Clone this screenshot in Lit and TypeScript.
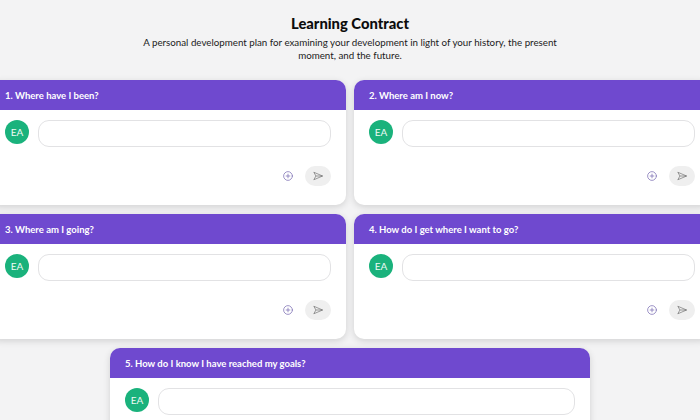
import { LitElement, html, css } from 'lit';
import { customElement, property } from 'lit/decorators.js';

@customElement('contract-card')
export class ContractCard extends LitElement {
  static styles = css`
    :host {
      display: block;
    }

    .card {
      background: #fff;
      border-radius: 10px;
      overflow: hidden;
      height: 125px;
      box-shadow: 0 2px 7px rgba(0, 0, 0, 0.14);
    }

    .card-header {
      height: 30px;
      box-sizing: border-box;
      padding: 0 15px;
      display: flex;
      align-items: center;
      background: #6f49cf;
      color: #fff;
      font-size: 9.5px;
      font-weight: 700;
    }

    .card-body {
      padding: 10px 15px 0;
    }

    .reply {
      display: flex;
      gap: 9px;
    }

    .avatar {
      flex: none;
      width: 24px;
      height: 24px;
      border-radius: 50%;
      background: #1ab27c;
      color: #eefaf5;
      font-size: 10px;
      display: flex;
      align-items: center;
      justify-content: center;
    }

    .field {
      flex: 1;
      height: 27px;
      box-sizing: border-box;
      background: #fff;
      border: 1px solid #e2e2e4;
      border-radius: 11px;
    }

    .actions {
      display: flex;
      align-items: center;
      justify-content: flex-end;
      gap: 12px;
      margin-top: 19px;
    }

    .add {
      display: block;
      width: 10px;
      height: 10px;
      color: #7d70b4;
    }

    .send {
      width: 26px;
      height: 20px;
      border-radius: 10px;
      background: #efefef;
      display: flex;
      align-items: center;
      justify-content: center;
      color: #5c5c5c;
    }

    .send svg {
      display: block;
      width: 10px;
      height: 10px;
    }
  `;

  @property({ type: String })
  heading = '';

  render() {
    return html`
      <div class="card">
        <div class="card-header">${this.heading}</div>
        <div class="card-body">
          <div class="reply">
            <div class="avatar">EA</div>
            <div class="field"></div>
          </div>
          <div class="actions">
            <svg class="add" viewBox="0 0 24 24" fill="none" stroke="currentColor" stroke-width="1.8" stroke-linecap="round">
              <circle cx="12" cy="12" r="10.5"/>
              <path d="M12 7.5v9M7.5 12h9"/>
            </svg>
            <div class="send">
              <svg viewBox="0 0 24 24" fill="none" stroke="currentColor" stroke-width="1.4" stroke-linejoin="round">
                <path d="M2 3l21 9-21 9 5-9zM7 12h16"/>
              </svg>
            </div>
          </div>
        </div>
      </div>
    `;
  }
}

@customElement('app-root')
export class AppRoot extends LitElement {
  static styles = css`
    :host {
      display: block;
      width: 700px;
      height: 420px;
      overflow: hidden;
      background: #f3f3f4;
      font-family: 'Lato', 'Liberation Sans', sans-serif;
    }

    .intro {
      padding-top: 14px;
      text-align: center;
      color: #1b1b1b;
    }

    .intro h1 {
      margin: 0;
      font-size: 14.75px;
      line-height: 18px;
      font-weight: 900;
      color: #0c0c0c;
    }

    .intro p {
      width: 420px;
      margin: 4px auto 0;
      font-size: 9.75px;
      line-height: 13px;
    }

    .grid {
      display: grid;
      grid-template-columns: 356px 356px;
      gap: 9px 8px;
      margin: 18px -10px 0;
    }

    .last {
      grid-column: 1 / -1;
      justify-self: center;
      width: 480px;
    }
  `;

  render() {
    return html`
      <div class="intro">
        <h1>Learning Contract</h1>
        <p>A personal development plan for examining your development in light of your history, the present moment, and the future.</p>
      </div>
      <div class="grid">
        <contract-card heading="1. Where have I been?"></contract-card>
        <contract-card heading="2. Where am I now?"></contract-card>
        <contract-card heading="3. Where am I going?"></contract-card>
        <contract-card heading="4. How do I get where I want to go?"></contract-card>
        <contract-card class="last" heading="5. How do I know I have reached my goals?"></contract-card>
      </div>
    `;
  }
}
